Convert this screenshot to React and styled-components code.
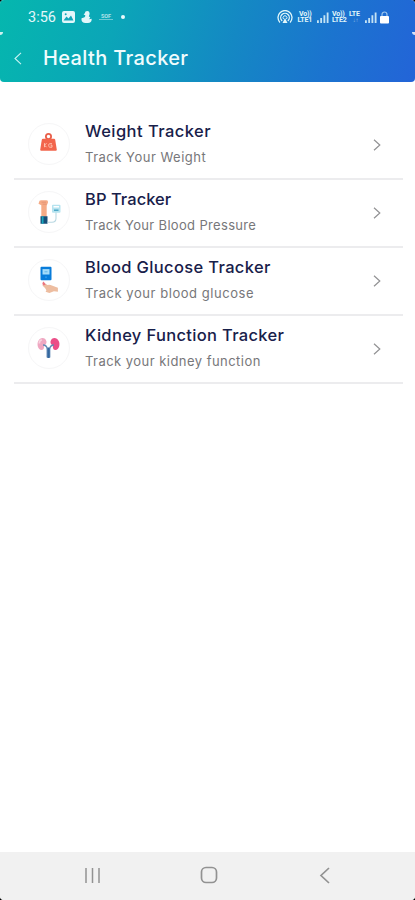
import React from 'react';
import styled, { createGlobalStyle } from 'styled-components';

const GlobalStyle = createGlobalStyle`
  * { box-sizing: border-box; }
  body { margin: 0; background: #000; font-family: Inter, "Open Sans", sans-serif; }
  svg { display: block; flex: none; }
`;

const Phone = styled.div`
  width: 415px;
  height: 900px;
  display: flex;
  flex-direction: column;
  overflow: hidden;
  background: #fff;
  border-radius: 4px;
`;

const Header = styled.header`
  height: 82px;
  flex: none;
  position: relative;
  background: linear-gradient(108deg, #05b7ae 0%, #0ba5b8 28%, #1488c4 56%, #1b74cf 78%, #2364d8 100%);
  border-radius: 0 0 4px 4px;

  &::before, &::after {
    content: "";
    position: absolute;
    top: 32px;
    width: 3px;
    height: 3px;
    background: rgba(255, 255, 255, 0.8);
  }
  &::before { left: 0; border-bottom-right-radius: 3px; }
  &::after { right: 0; border-bottom-left-radius: 3px; }
`;

const StatusBar = styled.div`
  height: 33px;
  display: flex;
  align-items: center;
  justify-content: space-between;
  padding: 1px 26px 0 28px;
  color: #e2f7fa;
`;

const StatusGroup = styled.div`
  display: flex;
  align-items: center;
  gap: ${({ $gap }) => $gap}px;
`;

const Clock = styled.span`
  font: 400 14.5px/18px Roboto, sans-serif;
  width: 29px;
  margin-right: -1px;
  padding-top: 1px;
`;

const Network = styled.span`
  display: flex;
  flex-direction: column;
  width: ${({ $width }) => $width}px;
  font: 700 7px/6.5px Roboto, sans-serif;
  letter-spacing: -0.2px;
  white-space: nowrap;
`;

const Faint = styled.span`
  opacity: 0.5;
  font-size: 6px;
  text-align: center;
`;

const Notice = styled.span`
  width: 14px;
  font: 700 5.5px/5px Roboto, sans-serif;
  border-bottom: 1px solid rgba(226, 247, 250, 0.6);
  opacity: 0.75;
  margin: 0 1px 0 1px;
  text-align: center;
`;

const Dot = styled.span`
  width: 4px;
  height: 4px;
  border-radius: 50%;
  background: #e9fafc;
  margin-left: 1px;
`;

const TitleBar = styled.div`
  height: 49px;
  display: flex;
  align-items: center;
  padding-left: 13px;
  gap: 20px;
`;

const BackButton = styled.button`
  border: 0;
  padding: 2px 0 0;
  background: none;
  color: #c9f4f3;
`;

const Heading = styled.h1`
  margin: 0;
  color: #f0fcfd;
  font-size: 20px;
  line-height: 28px;
  font-weight: 500;
  letter-spacing: 0.36px;
  white-space: nowrap;
`;

const List = styled.main`
  flex: 1;
  padding: 30px 12px 0 14px;
`;

const Row = styled.div`
  height: 68px;
  display: flex;
  align-items: center;
  padding: 0 22px 4px 14px;
  border-bottom: 2px solid #ececee;
`;

const Badge = styled.div`
  width: 42px;
  height: 42px;
  margin: 2px 15px 0 0;
  border-radius: 50%;
  border: 1px solid #f6f6f7;
  display: grid;
  place-items: center;
`;

const Copy = styled.div`
  flex: 1;
  white-space: nowrap;
`;

const Name = styled.div`
  color: #18204a;
  font-size: 16.5px;
  line-height: 24px;
  font-weight: 500;
  letter-spacing: ${({ $spacing }) => $spacing}px;
`;

const Detail = styled.div`
  margin-top: 3px;
  color: #77777a;
  font-size: 13px;
  line-height: 22px;
  letter-spacing: ${({ $spacing }) => $spacing}px;
`;

const ChevronSlot = styled.span`
  color: #929294;
  padding-top: 3px;
`;

const NavBar = styled.nav`
  height: 48px;
  flex: none;
  background: #f1f1f1;
  display: flex;
  justify-content: space-between;
  align-items: center;
  padding: 0 82px 2px 84px;
  color: #929292;
`;

const HomeButton = styled.span`
  margin-right: 3px;
`;

const Signal = () => (
  <svg width="12" height="12" viewBox="0 0 13 13" fill="currentColor">
    <path d="M0 10h2v3H0zM3.5 7.5h2V13h-2zM7 4.500h2V13H7zM10.500 1.500h2V13h-2z" opacity=".85" />
  </svg>
);

const Picture = () => (
  <svg width="13" height="12" viewBox="0 0 13 12">
    <rect width="13" height="12" rx="2" fill="currentColor" />
    <path d="M1.500 9.500 4.500 5.500 6.500 7.500 9 4.500 11.500 9.500z" fill="#12a7b9" />
    <circle cx="3.700" cy="3.200" r="1" fill="#12a7b9" />
  </svg>
);

const Duck = () => (
  <svg width="11" height="12" viewBox="0 0 11 12" fill="currentColor">
    <path d="M6.200 0a2.500 2.500 0 0 0-2.400 2.300L2.600 3.600l1.600.6c.3 1-.4 1.700-1.200 2.300L.6 7.300C0 10 1.500 12 4.500 12h2.400c2.800 0 4-1.800 3.700-4.300L8 8.200 9.300 6.400 7.800 5.300c.5-.8.9-1.600.8-2.800A2.400 2.400 0 0 0 6.200 0z" />
  </svg>
);

const Hotspot = () => (
  <svg width="16" height="14" viewBox="0 0 16 14" fill="none" stroke="currentColor" strokeWidth="1.300" strokeLinecap="round">
    <path d="M2.600 12a7 7 0 1 1 10.800 0M4.800 10.500a4.300 4.300 0 1 1 6.400 0" />
    <path d="M6.300 8.800a2 2 0 1 1 3.400 0" strokeWidth="1" />
    <path d="M8 8 5.500 13h5z" fill="currentColor" stroke="none" />
  </svg>
);

const Lock = () => (
  <svg width="9" height="13" viewBox="0 0 9 13">
    <path d="M2 6V3.500a2.500 2.500 0 0 1 5 0V6" fill="none" stroke="currentColor" strokeWidth="1.200" opacity=".65" />
    <rect y="5" width="9" height="7.500" rx="1" fill="#fff" />
  </svg>
);

const Chevron = () => (
  <svg width="8" height="12" viewBox="0 0 8 12" fill="none" stroke="currentColor" strokeWidth="1.200">
    <path d="m1 .8 5.800 5.200L1 11.200" />
  </svg>
);

const WeightIcon = () => (
  <svg width="30" height="30" viewBox="0.5 1.3 30 30">
    <circle cx="15" cy="8.800" r="2.600" fill="none" stroke="#e9604b" strokeWidth="1.800" />
    <path d="M9.500 11h11q1 0 1.200 1L23.300 22q0 1-1 1H7.700q-1 0-1-1l1.600-10q.2-1 1.200-1z" fill="#f2654c" />
    <path d="M11 15.500v4m0-2 2-2m-2 2 2 2M18.500 16h-2.300q-1 0-1 1.700t1 1.800h2.300v-2h-1.400" fill="none" stroke="#ffc0ad" strokeWidth="1" />
  </svg>
);

const PressureIcon = () => (
  <svg width="30" height="30" viewBox="0.5 -0.7 30 30">
    <path d="M5.500 4.500q0-2 2-2H13q1.800 0 1.500 2.200L13.200 8v11H7.800V7.500L5 6z" fill="#f5ab86" />
    <path d="M8 4.500h4.500M9 6.500h4" stroke="#df8e6e" strokeWidth=".7" />
    <path d="M7 18.500h7V26H7z" fill="#174e78" />
    <path d="M8.300 18.500H10V26H8.300z" fill="#18a8be" />
    <path d="M14 24.500h4.500q4 0 4-4V14" fill="none" stroke="#b9d8e2" strokeWidth="1.100" />
    <rect x="18.500" y="7" width="8.500" height="8" rx="1" fill="#b6e3ef" />
    <path d="M20 9h5.500" stroke="#fff" strokeWidth="1.500" />
    <path d="M20.500 12.500h4.500" stroke="#4da8c7" strokeWidth="1.500" />
  </svg>
);

const GlucoseIcon = () => (
  <svg width="30" height="30" viewBox="-0.5 -0.8 30 30">
    <rect x="6" y="1" width="11" height="13.500" rx="1" fill="#087cda" />
    <rect x="8" y="3.300" width="7" height="5.400" fill="#a5dcfa" />
    <path d="M10 6h3" stroke="#62b6e7" strokeWidth="1" />
    <circle cx="11.500" cy="11.500" r="1" fill="#2997ed" />
    <path d="M9 17.500q1.300-.5 4 1.700 2-.9 4.400.4l6 2.400v4l-4-.5-4.500 1.700-3.800-1.200.8-1.600-1.400-2.200L8 19.600z" fill="#edbda0" />
    <path d="m9 15.800 2.200 2.600q-1.300 1.600-2.600.8-1.600-1.200.4-3.400z" fill="#ec7580" />
  </svg>
);

const KidneyIcon = () => (
  <svg width="30" height="30" viewBox="0.5 -1 30 30">
    <path d="M13 7.500c-1-4.500-6.500-4.500-8.200-.4C3 10.500 4.500 16 8 16.100c3 .1 2.200-3.200 3-4.500.8-1.200 2.300-1.900 2-4.100z" fill="#efa7c1" />
    <path d="M17 7.500c1-4.500 6.500-4.500 8.200-.4 1.800 3.400.3 8.900-3.200 9-3 .1-2.200-3.200-3-4.500-.8-1.200-2.300-1.900-2-4.100z" fill="#eb4e88" />
    <path d="M5.800 9.500q0-3.500 2.600-3.500" stroke="#f8d2df" strokeWidth="1.700" fill="none" />
    <path d="M9.500 11q4 0 4.200 4.200V23.500M20.500 11q-4 0-4.300 4.200V23.500" fill="none" stroke="#6389b5" strokeWidth="1.300" />
    <path d="M15 13.500V24" stroke="#34689f" strokeWidth="2.300" />
  </svg>
);

const trackers = [
  { name: 'Weight Tracker', detail: 'Track Your Weight', icon: WeightIcon, nameSpacing: 0.45, detailSpacing: 0.5 },
  { name: 'BP Tracker', detail: 'Track Your Blood Pressure', icon: PressureIcon, nameSpacing: 0.05, detailSpacing: 0.33 },
  { name: 'Blood Glucose Tracker', detail: 'Track your blood glucose', icon: GlucoseIcon, nameSpacing: 0.35, detailSpacing: 0.55 },
  { name: 'Kidney Function Tracker', detail: 'Track your kidney function', icon: KidneyIcon, nameSpacing: 0.33, detailSpacing: 0.46 },
];

export default function App() {
  return (
    <>
      <GlobalStyle />
      <Phone>
        <Header>
          <StatusBar>
            <StatusGroup $gap={6}>
              <Clock>3:56</Clock>
              <Picture />
              <Duck />
              <Notice>SOF</Notice>
              <Dot />
            </StatusGroup>
            <StatusGroup $gap={3}>
              <Hotspot />
              <Network $width={18}><span>&nbsp;&nbsp;Vo))</span><span>&nbsp;LTE1</span></Network>
              <Signal />
              <Network $width={14}><span>Vo))</span><span>LTE2</span></Network>
              <Network $width={13}><span>LTE</span><Faint>↓↑</Faint></Network>
              <Signal />
              <Lock />
            </StatusGroup>
          </StatusBar>
          <TitleBar>
            <BackButton aria-label="Back">
              <svg width="10" height="13" viewBox="0 0 10 13" fill="none" stroke="currentColor" strokeWidth="1.100">
                <path d="M8 .8 2 6.500l6 5.700" />
              </svg>
            </BackButton>
            <Heading>Health Tracker</Heading>
          </TitleBar>
        </Header>
        <List>
          {trackers.map(({ name, detail, icon: Icon, nameSpacing, detailSpacing }) => (
            <Row key={name}>
              <Badge><Icon /></Badge>
              <Copy>
                <Name $spacing={nameSpacing}>{name}</Name>
                <Detail $spacing={detailSpacing}>{detail}</Detail>
              </Copy>
              <ChevronSlot><Chevron /></ChevronSlot>
            </Row>
          ))}
        </List>
        <NavBar>
          <svg width="17" height="17" viewBox="0 0 17 17" stroke="currentColor" strokeWidth="1.500">
            <path d="M2 1v15M8.500 1v15M15 1v15" />
          </svg>
          <HomeButton>
            <svg width="18" height="18" viewBox="0 0 18 18" fill="none" stroke="currentColor" strokeWidth="1.700">
              <rect x="1.500" y="1.500" width="15" height="15" rx="4.500" />
            </svg>
          </HomeButton>
          <svg width="14" height="17" viewBox="0 0 14 17" fill="none" stroke="currentColor" strokeWidth="1.700">
            <path d="M10 1 2 8.500l8 7.500" />
          </svg>
        </NavBar>
      </Phone>
    </>
  );
}
